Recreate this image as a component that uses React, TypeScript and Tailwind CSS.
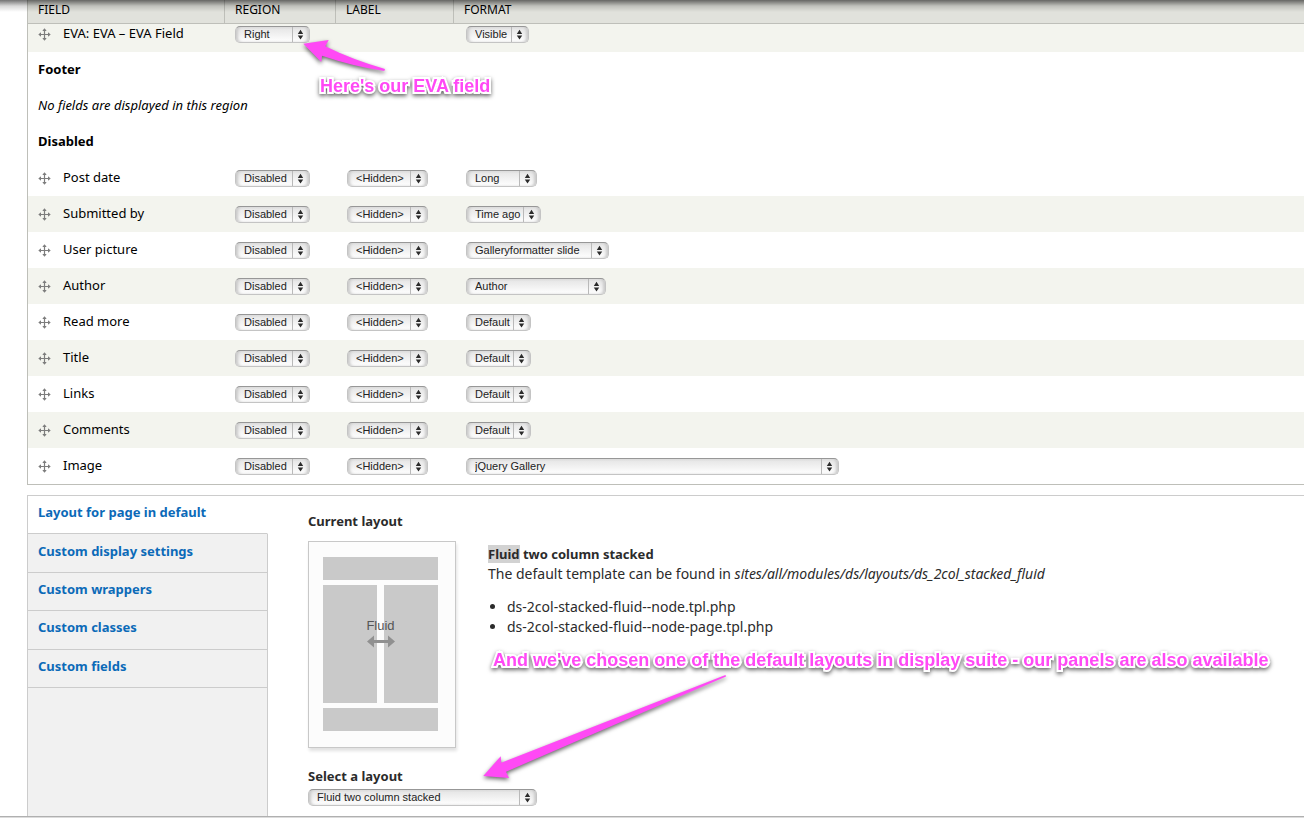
import type { ReactNode } from 'react';

const ARIAL = "font-['Liberation_Sans',Arial,sans-serif]";

type SelectProps = {
  label: string;
  value: string;
  width: string;
  id?: string;
};

function Select({ label, value, width, id }: SelectProps) {
  return (
    <span className={`relative block h-[17px] ${width}`}>
      <select
        id={id}
        aria-label={id ? undefined : label}
        className={`block h-[17px] w-full appearance-none rounded-[5px] border border-[#c4c4c4] border-t-[#979797] bg-linear-to-b from-[#e4e4e4] to-white py-0 pr-[18px] pl-2 text-[11px] leading-[15px] text-[#222] shadow-[inset_3px_0_3px_-1px_#c9c9c9,inset_-3px_0_3px_-1px_#c9c9c9] outline-none ${ARIAL}`}
      >
        <option>{value}</option>
      </select>
      <svg
        className="pointer-events-none absolute top-px right-0 h-[15px] w-[18px]"
        viewBox="0 0 18 15"
        aria-hidden="true"
      >
        <path d="M0.5 0V15" stroke="#b9b9b9" strokeWidth="1" />
        <path d="M8.5 2.8L11.2 7H5.8ZM8.5 12.6L11.2 8.6H5.8Z" fill="#2b2b2b" />
      </svg>
    </span>
  );
}

function MoveIcon() {
  return (
    <svg className="mt-[2px] block size-[13px] shrink-0" viewBox="0 0 13 13" aria-hidden="true">
      <path d="M6.5 1V12M1 6.5H12" stroke="#7d7d7d" strokeWidth="1.2" />
      <path
        d="M6.5 0.3L8.7 3H4.3ZM6.5 12.7L8.7 10H4.3ZM0.3 6.5L3 4.3V8.7ZM12.7 6.5L10 4.3V8.7Z"
        fill="#7d7d7d"
      />
    </svg>
  );
}

type Row = {
  name: string;
  format: string;
  formatWidth: string;
};

const rows: Row[] = [
  { name: 'Post date', format: 'Long', formatWidth: 'w-[71px]' },
  { name: 'Submitted by', format: 'Time ago', formatWidth: 'w-[75px]' },
  { name: 'User picture', format: 'Galleryformatter slide', formatWidth: 'w-[143px]' },
  { name: 'Author', format: 'Author', formatWidth: 'w-[140px]' },
  { name: 'Read more', format: 'Default', formatWidth: 'w-[65px]' },
  { name: 'Title', format: 'Default', formatWidth: 'w-[65px]' },
  { name: 'Links', format: 'Default', formatWidth: 'w-[65px]' },
  { name: 'Comments', format: 'Default', formatWidth: 'w-[65px]' },
  { name: 'Image', format: 'jQuery Gallery', formatWidth: 'w-[373px]' },
];

const tabs = [
  'Layout for page in default',
  'Custom display settings',
  'Custom wrappers',
  'Custom classes',
  'Custom fields',
];

function FieldName({ children }: { children: ReactNode }) {
  return (
    <div className="flex items-start gap-3 leading-[14px]">
      <MoveIcon />
      <span>{children}</span>
    </div>
  );
}

function FieldTable() {
  return (
    <table className="w-full table-fixed border-separate border-spacing-0 border-b border-[#bebfb9] text-[13px] text-black">
      <colgroup>
        <col className="w-[197px]" />
        <col className="w-[111px]" />
        <col className="w-[118px]" />
        <col />
      </colgroup>
      <thead>
        <tr className="h-6 bg-[#e1e2dc] text-left text-[12px] leading-4">
          <th className="border-r border-b border-[#bebfb9] pb-1 pl-[10px] font-normal">FIELD</th>
          <th className="border-r border-b border-[#bebfb9] pb-1 pl-[10px] font-normal">REGION</th>
          <th className="border-r border-b border-[#bebfb9] pb-1 pl-[10px] font-normal">LABEL</th>
          <th className="border-b border-[#bebfb9] pb-1 pl-[10px] font-normal">FORMAT</th>
        </tr>
      </thead>
      <tbody>
        <tr className="h-7 bg-[#f3f4ee] align-top">
          <td className="pt-[2px] pl-[10px]">
            <FieldName>EVA: EVA – EVA Field</FieldName>
          </td>
          <td className="pt-[2px] pl-[10px]">
            <Select label="Region for EVA" value="Right" width="w-[75px]" />
          </td>
          <td />
          <td className="pt-[2px] pl-3">
            <Select label="Format for EVA" value="Visible" width="w-[63px]" />
          </td>
        </tr>
        <tr className="h-9">
          <th colSpan={4} className="pl-[10px] text-left font-bold">Footer</th>
        </tr>
        <tr className="h-9">
          <td colSpan={4} className="pl-[10px] italic">No fields are displayed in this region</td>
        </tr>
        <tr className="h-9">
          <th colSpan={4} className="pl-[10px] text-left font-bold">Disabled</th>
        </tr>
        {rows.map((row) => (
          <tr key={row.name} className="h-9 align-top even:bg-[#f3f4ee]">
            <td className="pt-[10px] pl-[10px]">
              <FieldName>{row.name}</FieldName>
            </td>
            <td className="pt-[10px] pl-[10px]">
              <Select label={`Region for ${row.name}`} value="Disabled" width="w-[75px]" />
            </td>
            <td className="pt-[10px] pl-[11px]">
              <Select label={`Label for ${row.name}`} value="<Hidden>" width="w-[81px]" />
            </td>
            <td className="pt-[10px] pl-3">
              <Select label={`Format for ${row.name}`} value={row.format} width={row.formatWidth} />
            </td>
          </tr>
        ))}
      </tbody>
    </table>
  );
}

function LayoutPreview() {
  return (
    <div className="relative flex h-[207px] w-[148px] flex-col gap-[5px] border border-[#c8c8c8] bg-[#fcfcfc] pt-[15px] pr-[17px] pb-4 pl-[14px] shadow-[1px_3px_3px_#e2e2e2]">
      <div className="h-[23px] bg-[#c9c9c9]" />
      <div className="flex flex-1 gap-[7px]">
        <div className="flex-1 bg-[#c9c9c9]" />
        <div className="flex-1 bg-[#c9c9c9]" />
      </div>
      <div className="h-[23px] bg-[#c9c9c9]" />
      <div className={`absolute inset-x-0 top-[76px] flex flex-col items-center pr-[3px] text-[13px] leading-4 text-[#555] ${ARIAL}`}>
        <span>Fluid</span>
        <svg className="h-[14px] w-7" viewBox="0 0 28 14" aria-hidden="true">
          <path d="M0 7.5L7 1.5V6H21V1.5L28 7.5L21 13.5V9H7V13.5Z" fill="#909090" />
        </svg>
      </div>
    </div>
  );
}

function LayoutPanel() {
  return (
    <section className="flex-1 pt-[15px] pl-10 text-[13px] leading-5 text-[#2b2b2b]">
      <h2 className="font-bold">Current layout</h2>
      <div className="mt-[10px] flex gap-8">
        <LayoutPreview />
        <div className="pt-[3px]">
          <h3 className="font-bold">
            <mark className="bg-[#d2d2d2] text-inherit">Fluid</mark> two column stacked
          </h3>
          <div className="text-[14px]">
            <p>
              The default template can be found in <em>sites/all/modules/ds/layouts/ds_2col_stacked_fluid</em>
            </p>
            <ul className="mt-[13px] list-disc pl-[19px]">
              <li>ds-2col-stacked-fluid--node.tpl.php</li>
              <li>ds-2col-stacked-fluid--node-page.tpl.php</li>
            </ul>
          </div>
        </div>
      </div>
      <label htmlFor="layout" className="mt-[18px] block font-bold">
        Select a layout
      </label>
      <div className="mt-[3px] pb-[10px]">
        <Select id="layout" label="Select a layout" value="Fluid two column stacked" width="w-[229px]" />
      </div>
    </section>
  );
}

function SideTabs() {
  return (
    <nav className="w-60 border-r border-[#cccccc] bg-[#f1f1f1]">
      <ul className="-mr-px flex h-48 flex-col text-[13px] leading-4 font-bold text-[#0b6ab8]">
        {tabs.map((tab) => (
          <li
            key={tab}
            className="flex flex-1 items-center border-r border-b border-[#cccccc] pb-[5px] pl-[10px] first:border-r-white first:bg-white"
          >
            <a href="#">{tab}</a>
          </li>
        ))}
      </ul>
    </nav>
  );
}

function Note({ className, children }: { className: string; children: ReactNode }) {
  return (
    <p
      className={`absolute text-[18px] leading-5 font-bold whitespace-nowrap text-[#ff49f5] [paint-order:stroke_fill] [-webkit-text-stroke:4px_white] drop-shadow-[0_2px_2px_rgba(0,0,0,0.6)] ${ARIAL} ${className}`}
    >
      {children}
    </p>
  );
}

export default function App() {
  return (
    <main className="relative overflow-hidden border-b border-[#dcdcdc] bg-white font-['Noto_Sans','Lucida_Grande',sans-serif]">
      <div className="border-b border-[#b0b0b0] pl-[27px]">
        <div className="border-l border-[#bebfb9]">
          <FieldTable />
        </div>
        <div className="mt-[10px] flex border-t border-l border-[#cccccc]">
          <SideTabs />
          <LayoutPanel />
        </div>
      </div>

      <div className="pointer-events-none absolute inset-x-0 top-0 h-3 bg-linear-to-b from-black/55 via-black/15 to-transparent" />

      <Note className="top-[76px] left-[320px]">Here's our EVA field</Note>
      <svg
        className="pointer-events-none absolute top-9 left-[300px] h-10 w-[90px] drop-shadow-[0_2px_2px_rgba(0,0,0,0.6)]"
        viewBox="300 36 90 40"
        aria-hidden="true"
      >
        <path d="M303.3 43.7L328.7 40L325.3 46.3Q353 60 385 69L384.3 71Q352 66 322 55.7L321.3 62Z" fill="#ff49f5" />
      </svg>

      <Note className="top-[650px] left-[493px]">
        And we've chosen one of the default layouts in display suite - our panels are also available
      </Note>
      <svg
        className="pointer-events-none absolute top-[670px] left-[480px] h-[116px] w-[250px] drop-shadow-[0_2px_2px_rgba(0,0,0,0.6)]"
        viewBox="480 670 250 116"
        aria-hidden="true"
      >
        <path d="M483.3 776L500.7 756.3L501.3 762.7L725.5 675L726 676.5L506 771.7L509 778Z" fill="#ff49f5" />
      </svg>
    </main>
  );
}
